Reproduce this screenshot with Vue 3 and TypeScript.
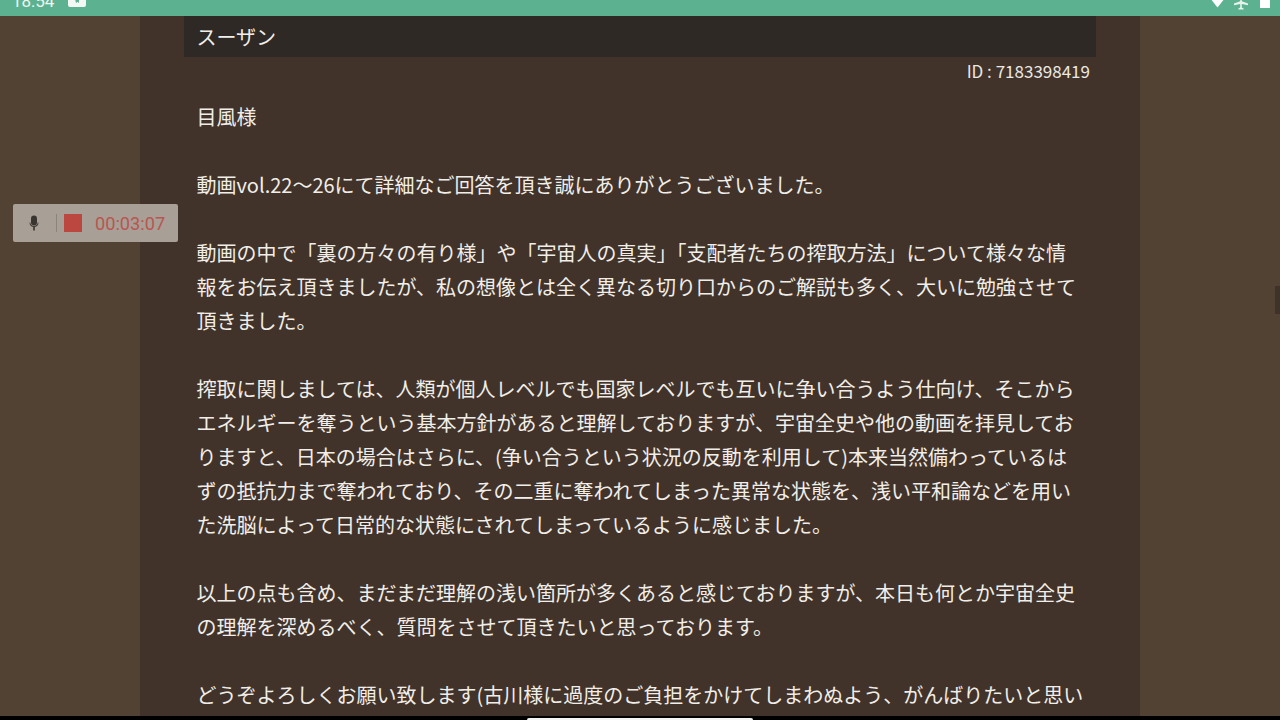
<script setup lang="ts">
const paragraphs: string[] = [
  '目風様',
  '動画vol.22～26にて詳細なご回答を頂き誠にありがとうございました。',
  '動画の中で「裏の方々の有り様」や「宇宙人の真実」「支配者たちの搾取方法」について様々な情報をお伝え頂きましたが、私の想像とは全く異なる切り口からのご解説も多く、大いに勉強させて頂きました。',
  '搾取に関しましては、人類が個人レベルでも国家レベルでも互いに争い合うよう仕向け、そこからエネルギーを奪うという基本方針があると理解しておりますが、宇宙全史や他の動画を拝見しておりますと、日本の場合はさらに、(争い合うという状況の反動を利用して)本来当然備わっているはずの抵抗力まで奪われており、その二重に奪われてしまった異常な状態を、浅い平和論などを用いた洗脳によって日常的な状態にされてしまっているように感じました。',
  '以上の点も含め、まだまだ理解の浅い箇所が多くあると感じておりますが、本日も何とか宇宙全史の理解を深めるべく、質問をさせて頂きたいと思っております。',
  'どうぞよろしくお願い致します(古川様に過度のご負担をかけてしまわぬよう、がんばりたいと思います。)'
]
</script>

<template>
  <div class="screen">
    <header class="status">
      <div class="status-left">
        <span class="clock">18:54</span>
        <svg class="status-badge" width="20" height="14" viewBox="0 0 20 14">
          <path d="M3 0h14a2 2 0 0 1 2 2v10a2 2 0 0 1-2 2H3a2 2 0 0 1-2-2V2a2 2 0 0 1 2-2z" fill="#f4f8f5" />
          <path d="M8 6h4v4l-1.5-1.3L9 10z" fill="#5cb190" />
        </svg>
      </div>
      <div class="status-right">
        <svg width="15" height="10" viewBox="0 0 15 10"><path d="M0 0h15L7.5 9.5z" fill="#fff" /></svg>
        <svg class="plane" width="14" height="12" viewBox="0 0 14 12"><path d="M6.2 0h1.6v3.2L14 5.6v1.6L7.8 6v3.4l1.8 1.2v1H4.4v-1l1.8-1.2V6L0 7.2V5.6l6.2-2.4z" fill="#e8f3ed" /></svg>
        <svg width="10" height="10" viewBox="0 0 10 10"><rect x="0" y="0" width="10" height="10" fill="#fff" /></svg>
      </div>
    </header>

    <main class="page">
      <section class="column">
        <h2 class="name">スーザン</h2>
        <p class="id">ID : 7183398419</p>
        <article class="body">
          <p v-for="(text, i) in paragraphs" :key="i" class="para">{{ text }}</p>
        </article>
      </section>
    </main>

    <div class="recorder">
      <svg class="mic" width="12" height="16" viewBox="0 0 12 16">
        <rect x="3" y="0.5" width="6" height="10" rx="3" fill="#3a3531" />
        <path d="M1.5 7.5c0 6 9 6 9 0l-.8 0c0 4.6-7.4 4.6-7.4 0z" fill="#3a3531" />
        <rect x="5.2" y="12" width="1.6" height="3.5" fill="#3a3531" />
      </svg>
      <span class="divider"></span>
      <span class="stop"></span>
      <span class="time">00:03:07</span>
    </div>

    <div class="edge-tab"></div>

    <footer class="navbar"><span class="pill"></span></footer>
  </div>
</template>

<style scoped>
.screen {
  position: relative;
  width: 1280px;
  height: 720px;
  overflow: hidden;
  display: flex;
  flex-direction: column;
  background: #524234;
  font-family: "Noto Sans CJK JP", "Noto Sans", sans-serif;
  color: #f1eeea;
}
.status {
  flex: none;
  height: 16px;
  background: #5cb190;
  display: flex;
  justify-content: space-between;
  align-items: flex-end;
  padding: 0 10px 0 12px;
  overflow: hidden;
}
.status-left {
  display: flex;
  align-items: flex-end;
  gap: 13px;
  margin-bottom: 5px;
}
.clock {
  font-family: Roboto, sans-serif;
  font-size: 17px;
  line-height: 20px;
  color: #eef6f1;
}
.status-badge {
  display: block;
  margin-bottom: 4px;
}
.status-right {
  display: flex;
  align-items: flex-end;
  gap: 9px;
  margin-bottom: 8px;
}
.plane {
  margin-bottom: -2px;
  margin-right: 3px;
}
.page {
  flex: 1;
  min-height: 0;
  display: flex;
  justify-content: center;
}
.column {
  width: 1000px;
  background: #413329;
  padding: 0 44px;
  box-sizing: border-box;
}
.name {
  margin: 0;
  height: 41px;
  padding: 0 12.5px;
  background: #2e2925;
  font-size: 20px;
  font-weight: 400;
  line-height: 41px;
}
.id {
  margin: 0;
  padding-right: 6px;
  text-align: right;
  font-size: 17px;
  line-height: 28px;
  color: #ece8e3;
}
.body {
  padding: 0 12px 0 12.5px;
  margin-top: 15px;
}
.para {
  margin: 0 0 34px;
  font-size: 20px;
  line-height: 34px;
}
.recorder {
  position: absolute;
  left: 13px;
  top: 204px;
  width: 165px;
  height: 38px;
  box-sizing: border-box;
  display: flex;
  align-items: center;
  padding-left: 15px;
  background: #a89f97;
  border-radius: 2px;
}
.mic {
  flex: none;
}
.divider {
  width: 1px;
  height: 18px;
  margin-left: 16px;
  background: #8c837b;
}
.stop {
  width: 18px;
  height: 18px;
  margin-left: 7px;
  background: #bb4740;
}
.time {
  margin-left: 13px;
  font-family: Roboto, sans-serif;
  font-size: 18.2px;
  color: #b9564f;
}
.edge-tab {
  position: absolute;
  right: 0;
  top: 286px;
  width: 5px;
  height: 28px;
  background: #3f3228;
}
.navbar {
  position: absolute;
  left: 0;
  right: 0;
  bottom: 0;
  height: 4px;
  background: #000;
  display: flex;
  justify-content: center;
}
.pill {
  width: 226px;
  height: 4px;
  background: #f4f4f4;
  border-radius: 2px 2px 0 0;
  margin-top: 2px;
}
</style>
